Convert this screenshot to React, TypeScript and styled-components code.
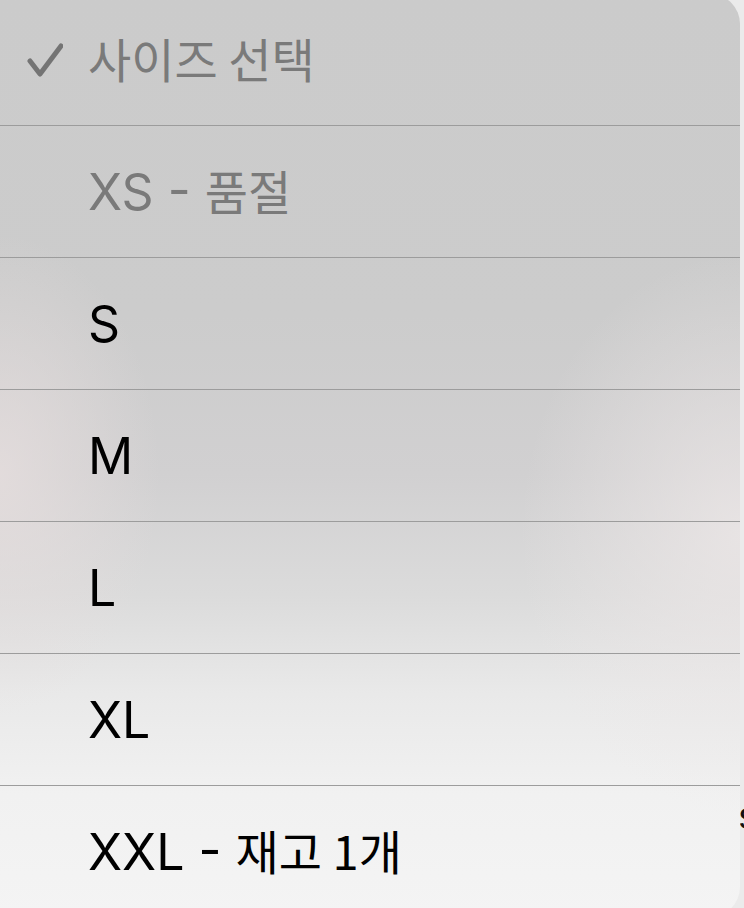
import styled, { createGlobalStyle } from "styled-components";

const GlobalStyle = createGlobalStyle`
  html, body {
    margin: 0;
    padding: 0;
    background: #ebebeb;
    overflow: hidden;
  }
  body {
    font-family: Inter, "Noto Sans CJK KR", sans-serif;
  }
`;

const Page = styled.div`
  display: flex;
  width: 744px;
  height: 908px;
  overflow: hidden;
`;

const Menu = styled.ul`
  flex: 0 0 740px;
  margin: -6px 0 0;
  padding: 0;
  list-style: none;
  height: 923px;
  border-radius: 0 30px 30px 0;
  overflow: hidden;
  background:
    radial-gradient(ellipse 160px 240px at 0px 480px, rgba(230, 222, 222, 0.8), rgba(230, 222, 222, 0) 100%),
    radial-gradient(ellipse 220px 280px at 740px 540px, rgba(236, 231, 231, 0.8), rgba(236, 231, 231, 0) 100%),
    linear-gradient(
      to bottom,
      #cbcbcb 0px,
      #cccccc 320px,
      #d1d0d1 480px,
      #dbdbdb 600px,
      #e9e9e9 700px,
      #f1f1f1 800px,
      #f4f4f4 923px
    );
`;

const Row = styled.li<{ $muted?: boolean }>`
  position: relative;
  display: flex;
  align-items: center;
  height: 131px;
  padding-left: 88px;
  color: ${({ $muted }) => ($muted ? "#7a7a7a" : "#000000")};
  & + & {
    border-top: 1px solid #9c9c9c;
  }
`;

const Label = styled.span`
  font-size: 50px;
  line-height: 1;
  white-space: pre;
`;

const Check = styled.svg`
  position: absolute;
  left: 27px;
  top: 50%;
  margin-top: -17px;
  width: 36px;
  height: 34px;
`;

const Ko = styled.span`
  font-family: "Noto Sans CJK KR", sans-serif;
  font-size: 47px;
`;

const Sliver = styled.div`
  flex: 0 0 4px;
  overflow: hidden;
`;

const BehindText = styled.span`
  display: block;
  margin-top: 796px;
  margin-left: -2px;
  font-size: 38px;
  color: #111;
  line-height: 1;
`;

const items: { label: string; ko?: string; muted?: boolean }[] = [
  { label: "XS - ", ko: "품절", muted: true },
  { label: "S" },
  { label: "M" },
  { label: "L" },
  { label: "XL" },
  { label: "XXL - ", ko: "재고 1개" },
];

export default function App() {
  return (
    <>
      <GlobalStyle />
      <Page>
        <Menu>
          <Row $muted>
            <Check viewBox="0 0 36 34">
              <path
                d="M3 18 L13 31 L34 3"
                fill="none"
                stroke="#747474"
                strokeWidth="5"
                strokeLinecap="round"
                strokeLinejoin="round"
              />
            </Check>
            <Label>
              <Ko>사이즈 선택</Ko>
            </Label>
          </Row>
          {items.map((it) => (
            <Row key={it.label} $muted={it.muted}>
              <Label>
                {it.label}
                {it.ko && <Ko>{it.ko}</Ko>}
              </Label>
            </Row>
          ))}
        </Menu>
        <Sliver>
          <BehindText>s</BehindText>
        </Sliver>
      </Page>
    </>
  );
}
